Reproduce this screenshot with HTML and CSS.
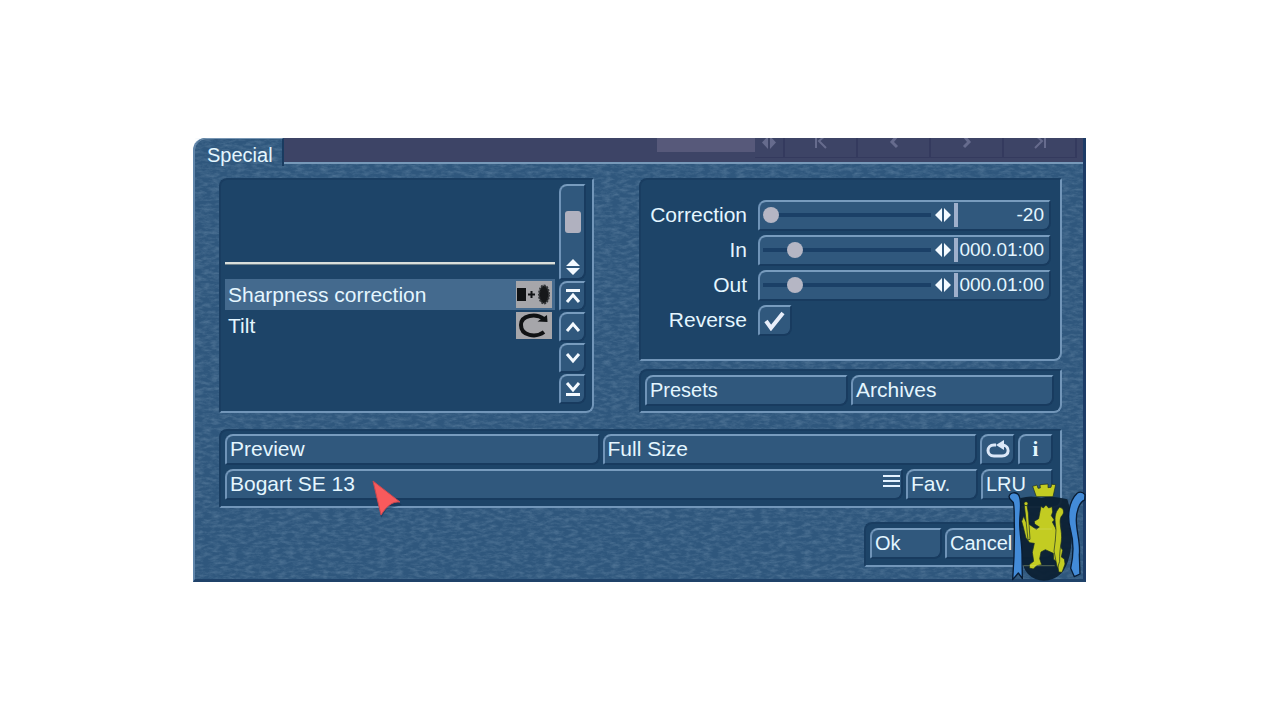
FILE: index.html
```html
<!DOCTYPE html>
<html lang="en">
<head>
<meta charset="utf-8">
<title>Special</title>
<link rel="stylesheet" href="styles.css">
</head>
<body>
<main class="dialog">
  <svg class="texture" aria-hidden="true">
    <filter id="brushed" x="0" y="0" width="100%" height="100%">
      <feTurbulence type="fractalNoise" baseFrequency="0.12 0.3" numOctaves="4" seed="8"/>
      <feColorMatrix values="0 0 0 0 0.5  0 0 0 0 0.66  0 0 0 0 0.8  1.6 0 0 0 -0.6"/>
    </filter>
    <rect width="100%" height="100%" filter="url(#brushed)"/>
  </svg>

  <header class="header">
    <h1 class="tab">Special</h1>
    <div class="strip">
      <span class="strip-field"></span>
      <span class="strip-cell narrow"><svg width="16" height="14" viewBox="0 0 16 14"><path d="M7 -2v13L1 4.500zM9 -2v13l6-6.500z" fill="currentColor"/></svg></span>
      <span class="strip-cell"><svg width="14" height="14" viewBox="0 0 14 14"><path d="M2-3v13M12-3 5 3l7 7" fill="none" stroke="currentColor" stroke-width="2"/></svg></span>
      <span class="strip-cell"><svg width="14" height="14" viewBox="0 0 14 14"><path d="M10-2 5 4l5 5" fill="none" stroke="currentColor" stroke-width="3"/></svg></span>
      <span class="strip-cell"><svg width="14" height="14" viewBox="0 0 14 14"><path d="m4-2 5 6-5 5" fill="none" stroke="currentColor" stroke-width="3"/></svg></span>
      <span class="strip-cell"><svg width="14" height="14" viewBox="0 0 14 14"><path d="M12-3v13M2 10l7-7-7-6" fill="none" stroke="currentColor" stroke-width="2"/></svg></span>
    </div>
  </header>

  <div class="content">
    <div class="columns">
      <section class="panel effects">
        <ul class="list" role="listbox" aria-label="Effects">
          <li class="divider" role="presentation"></li>
          <li class="item selected" role="option" aria-selected="true">Sharpness correction
            <svg class="thumb" width="36" height="27" viewBox="0 0 36 27"><rect width="36" height="27" fill="#a6a6aa"/><path d="M1 7h9v13H1z" fill="#101214"/><path d="M12 13.500h7M15.500 10v7" stroke="#101214" stroke-width="2"/><ellipse cx="28" cy="13.500" rx="5" ry="9" fill="#16181a" stroke="#35383b" stroke-width="2" stroke-dasharray="2 1"/></svg>
          </li>
          <li class="item" role="option" aria-selected="false">Tilt
            <svg class="thumb" width="36" height="27" viewBox="0 0 36 27"><rect width="36" height="27" fill="#a6a6aa"/><path d="M28 20C20 26 5 24 5 13 5 3 20 1 28 7" fill="none" stroke="#101214" stroke-width="4"/><path d="m31 3 .5 7-10-.5z" fill="#101214"/></svg>
          </li>
        </ul>
        <div class="scroller">
          <div class="scrollbar key"><span class="scroll-thumb"></span><svg width="16" height="16" viewBox="0 0 16 16"><path d="m8 0 7 7H1zM8 16l7-7H1z" fill="#f4faff"/></svg></div>
          <button class="key" aria-label="First"><svg width="16" height="14" viewBox="0 0 16 14"><path d="M1 1.500h14M2 13 8 6l6 7" /></svg></button>
          <button class="key" aria-label="Up"><svg width="16" height="14" viewBox="0 0 16 14"><path d="M2 11 8 4l6 7"/></svg></button>
          <button class="key" aria-label="Down"><svg width="16" height="14" viewBox="0 0 16 14"><path d="m2 3 6 7 6-7"/></svg></button>
          <button class="key" aria-label="Last"><svg width="16" height="14" viewBox="0 0 16 14"><path d="M1 12.500h14M2 1l6 7 6-7"/></svg></button>
        </div>
      </section>

      <div class="side">
        <section class="panel settings">
          <label for="correction">Correction</label>
          <div class="key slider"><input type="range" id="correction" min="0" max="100" value="0"><svg width="16" height="14" viewBox="0 0 16 14"><path d="M7 0v14L0 7zM9 0v14l7-7z" fill="#f4faff"/></svg><input class="value" type="text" value="-20" aria-label="Correction value"></div>
          <label for="in">In</label>
          <div class="key slider"><input type="range" id="in" min="0" max="100" value="16"><svg width="16" height="14" viewBox="0 0 16 14"><path d="M7 0v14L0 7zM9 0v14l7-7z" fill="#f4faff"/></svg><input class="value" type="text" value="000.01:00" aria-label="In value"></div>
          <label for="out">Out</label>
          <div class="key slider"><input type="range" id="out" min="0" max="100" value="16"><svg width="16" height="14" viewBox="0 0 16 14"><path d="M7 0v14L0 7zM9 0v14l7-7z" fill="#f4faff"/></svg><input class="value" type="text" value="000.01:00" aria-label="Out value"></div>
          <label for="reverse">Reverse</label>
          <div class="check"><input class="key" type="checkbox" id="reverse" checked><svg width="22" height="20" viewBox="0 0 22 20"><path d="m2 10 5 7L19 2" fill="none" stroke="#e8eefa" stroke-width="4"/></svg></div>
        </section>
        <section class="panel presets">
          <button class="key">Presets</button>
          <button class="key wide">Archives</button>
        </section>
      </div>
    </div>

    <section class="panel playback">
      <div class="row">
        <button class="key grow wide">Preview</button>
        <button class="key grow wide">Full Size</button>
        <button class="key square" aria-label="Loop"><svg width="26" height="20" viewBox="0 0 26 20"><path d="M11 5H9c-8 0-8 11 0 11h8c8 0 8-10 1-11" fill="none" stroke="#dce8f8" stroke-width="3"/><path d="M19 0v10l-8-5z" fill="#dce8f8"/></svg></button>
        <button class="key square info">i</button>
      </div>
      <div class="row">
        <button class="key grow wide menu">Bogart SE 13<svg width="18" height="12" viewBox="0 0 18 12"><path d="M0 1h17M0 6h17M0 11h17" stroke="#e4f2ff" stroke-width="2"/></svg></button>
        <button class="key small wide">Fav.</button>
        <button class="key small">LRU</button>
      </div>
    </section>

    <footer class="panel actions">
      <button class="key">Ok</button>
      <button class="key">Cancel</button>
    </footer>
  </div>

  <svg class="pointer" width="34" height="42" viewBox="0 0 34 42" aria-hidden="true"><path d="m3 4 27 21-15 4-6 9z" fill="#123052" opacity=".5"/><path d="m1 1 27 21c-8-1-14 5-19 13z" fill="#f85a5c" stroke="#c9484f"/></svg>

  <svg class="crest" width="78" height="100" viewBox="54 18 234 300" aria-hidden="true">
    <path d="M92 66q32-9 62 0 28-9 78 4l10 34c9 60 6 155-30 190-30 27-71 27-98 0C78 252 81 144 92 66z" fill="#0c2033" opacity=".94"/>
    <g fill="#438bd8" stroke="#091d35" stroke-width="4" stroke-linejoin="round">
      <path d="M57 62c3-14 22-16 30-3 10 22 2 48 2 82 0 33 7 62 7 94l1 73-12-17-17 20c4-53 6-115 5-165-1-32 1-46-3-66-4-7-12-9-13-18z"/>
      <path d="M262 51q13-7 23 5l-1 16c-14 4-26 33-25 63 1 36 13 68 9 101l2 58-17 8-11-25c9-39 11-74-1-118-10-36-6-82 21-108z"/>
    </g>
    <g fill="#c3cc22" stroke="#182a24" stroke-width="2" stroke-linejoin="round">
      <path d="m128 31 13-4 3 10 7-1-1-10 24-2v11l9-1 2-9 12 1-8 36h-50z"/>
      <path d="m153 91 7 5 8-9 8 9 10-4 2 16-4 11 9 13-6 6 9 17c8 15 6 29 1 41l12 12 9 15-4 20 9 6 2 15-9 25-10-1-4-29-11-9-1-18-24-11-13 7-4 20 6 18-15 3-10 10-12-3 1-11 12-9-4-27 6-27-14-2-11-14-9-36-4-14 6-15 7 16 11 9 20 14 9-7-14-9-1-8 13-8z"/>
      <path d="m192 225 4-33 2-30c-1-20-7-36 2-56l8-12c15 1 16 19 6 27-10 18 4 43 0 74-3 20-6 41-5 61l-7 21z"/>
      <path d="m103 89 8-1 4 23 5 79-6 2-8-78z"/><circle cx="108" cy="83" r="6"/>
    </g>
    <path d="M123 159h63M100 269h94" stroke="#dce58c" stroke-width="2" opacity=".5"/>
  </svg>
</main>
</body>
</html>
```
FILE: styles.css
```css
* { box-sizing: border-box; }

body {
  margin: 0;
  padding: 138px 194px 139px 193px;
  background: #fff;
  color: #e4f6ff;
  font: 20px/24px "Liberation Sans", Arial, sans-serif;
}

.dialog {
  position: relative;
  background: #2f577d;
  border-left: 2px solid #6085aa;
  border-right: 3px solid #1d3c67;
  border-bottom: 3px solid #1f4269;
  border-top-left-radius: 12px;
}

.texture {
  position: absolute;
  inset: 0;
  width: 100%;
  height: 100%;
  opacity: .25;
}

.header {
  position: relative;
  display: flex;
  height: 26px;
}

.tab {
  width: 89px;
  height: 28px;
  margin: 0;
  padding: 4px 0 0 12px;
  border-top: 1px solid #7896b3;
  border-right: 2px solid #193b60;
  border-top-left-radius: 12px;
  font-size: 20px;
  font-weight: normal;
  line-height: 24px;
}

.strip {
  flex: 1;
  display: flex;
  justify-content: flex-end;
  background: #3d4466;
  border-bottom: 2px solid #7799b9;
  color: #666b8d;
}

.strip-field { width: 98px; height: 14px; background: #57597a; }

.strip-cell {
  width: 73px;
  height: 20px;
  display: flex;
  justify-content: center;
  border-right: 2px solid #343a5e;
  border-bottom: 1px solid #343a5e;
}

.strip-cell.narrow { width: 30px; }
.strip-cell:last-child { margin-right: 6px; }

.content {
  position: relative;
  padding: 14px 21px 12px 24px;
}

.columns {
  display: grid;
  grid-template-columns: 375fr 423fr;
  gap: 45px;
}

.panel {
  background: #1d4468;
  border: 2px solid #193d61;
  border-right-color: #7296b9;
  border-bottom-color: #7296b9;
  border-radius: 8px 2px 8px 2px;
}

.effects { display: flex; gap: 4px; padding: 4px 6px 3px 4px; }

.list {
  flex: 1;
  margin: 0;
  padding: 78px 0 0;
  list-style: none;
  font-size: 21px;
}

.divider {
  height: 3px;
  margin-bottom: 14px;
  background: #d9dfdc;
  border-bottom: 1px solid #70838e;
}

.item {
  display: flex;
  align-items: center;
  justify-content: space-between;
  height: 31px;
  padding: 0 3px;
}

.selected { background: #446a8e; }

.scroller { width: 27px; display: flex; flex-direction: column; gap: 1px; }

.key {
  margin: 0;
  padding: 0 3px 2px;
  height: 31px;
  border: 2px solid #183b5f;
  border-top-color: #789cbe;
  border-left-color: #7094b8;
  border-radius: 8px 2px 8px 2px;
  background: #30587d;
  color: inherit;
  font: inherit;
  text-align: left;
}

.scroller .key {
  height: 30px;
  padding: 0;
  display: flex;
  align-items: center;
  justify-content: center;
}

.scroller path { stroke: #f4faff; stroke-width: 3; fill: none; }

.scroller .scrollbar {
  height: 96px;
  flex-direction: column;
  justify-content: flex-end;
  gap: 26px;
  padding-bottom: 3px;
}

.scroller .scrollbar path { fill: #f4faff; stroke: none; }
.scroll-thumb { width: 16px; height: 22px; border-radius: 3px; background: #b0b1bf; }

.side { display: flex; flex-direction: column; gap: 8px; }

.settings {
  display: grid;
  grid-template-columns: 107px 1fr;
  align-content: start;
  align-items: center;
  gap: 4px 10px;
  height: 183px;
  padding: 20px 9px 0 0;
  font-size: 21px;
}

.settings label { text-align: right; padding: 0 1px 2px 0; }

.slider { display: flex; align-items: center; }

.slider input[type="range"] {
  flex: 1;
  min-width: 0;
  height: 16px;
  margin: 0 4px 0 0;
  appearance: none;
  background: linear-gradient(#1b4067, #1b4067) center / 100% 4px no-repeat;
}

.slider input::-webkit-slider-thumb {
  appearance: none;
  width: 16px;
  height: 16px;
  border-radius: 50%;
  background: #b5b6c4;
}

.value {
  width: 92px;
  height: 24px;
  margin-left: 3px;
  padding: 0 2px 0 0;
  border: 0;
  border-left: 4px solid #9fb0cc;
  background: none;
  color: inherit;
  font: inherit;
  font-size: 19px;
  text-align: right;
}

.check { display: grid; width: 34px; }
.check > * { grid-area: 1 / 1; }
.check .key { appearance: none; }
.check svg { place-self: center; z-index: 1; pointer-events: none; }

.presets {
  display: grid;
  grid-template-columns: 1fr 1fr;
  gap: 3px;
  padding: 4px 6px 5px 4px;
}

.wide { font-size: 21px; }

.playback {
  display: grid;
  gap: 4px;
  margin-top: 16px;
  padding: 3px 7px 6px 4px;
}

.row { display: flex; gap: 3px; }
.grow { flex: 1; }
.square { width: 35px; padding: 0; display: flex; align-items: center; justify-content: center; }
.info { font: bold 21px "Liberation Serif", serif; }
.small { width: 72px; }
.menu { display: flex; align-items: center; justify-content: space-between; padding-right: 0; }
.menu svg { margin-bottom: 6px; }

.actions {
  display: grid;
  grid-template-columns: 72px 1fr;
  gap: 3px;
  width: 198px;
  margin: 14px 0 0 auto;
  padding: 4px 7px 6px 4px;
}

.pointer { position: absolute; left: 177px; top: 342px; }
.crest { position: absolute; right: -3px; bottom: -3px; }
```
